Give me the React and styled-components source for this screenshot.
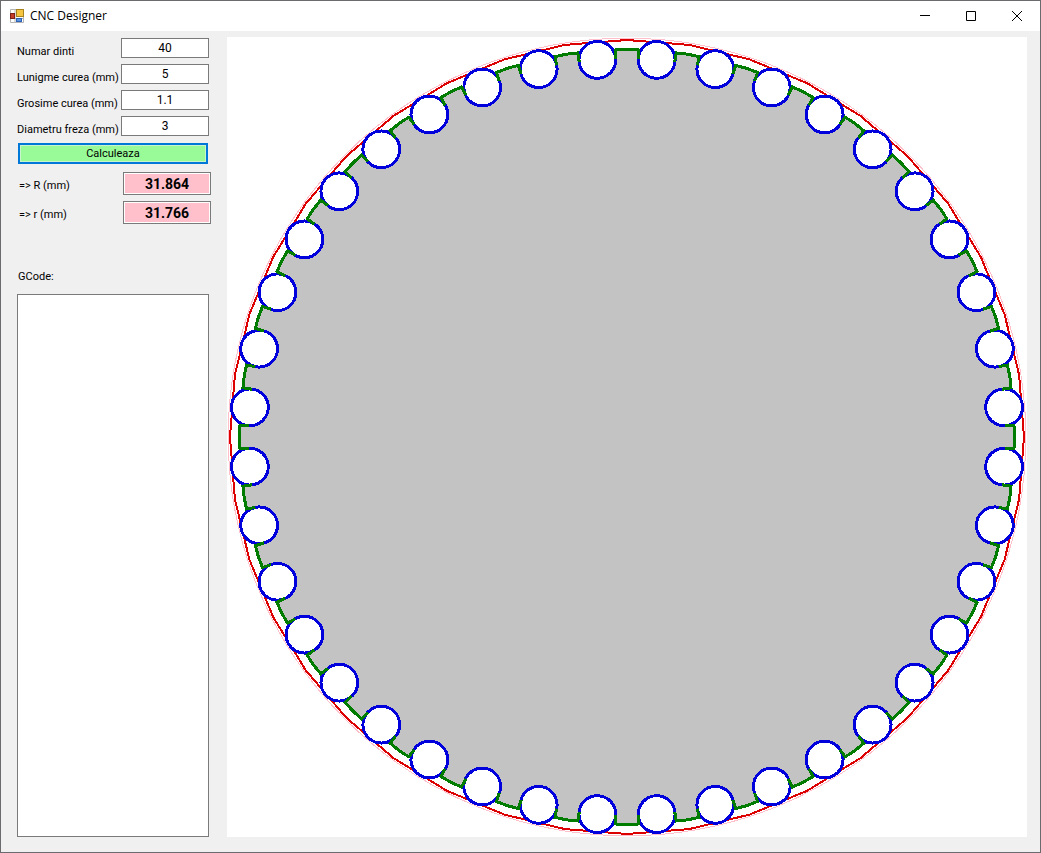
import React from 'react';
import styled, { createGlobalStyle } from 'styled-components';

const GlobalStyle = createGlobalStyle`
  * {
    box-sizing: border-box;
  }

  body {
    margin: 0;
    font-family: Roboto, "Liberation Sans", Arial, sans-serif;
    font-size: 11px;
    line-height: 13px;
    color: #000;
  }
`;

const Window = styled.div`
  min-height: 100vh;
  display: flex;
  flex-direction: column;
  background: #f0f0f0;
  border: 1px solid #6b6b6d;
`;

const TitleBar = styled.header`
  display: flex;
  align-items: stretch;
  height: 30px;
  padding-left: 9px;
  background: #fff;
`;

const AppIcon = styled.svg`
  align-self: center;
  width: 14px;
  height: 14px;
  margin-right: 6px;
`;

const Title = styled.h1`
  flex: 1;
  margin: 0;
  font-family: "Open Sans", "Noto Sans", sans-serif;
  font-size: 12px;
  font-weight: 400;
  line-height: 30px;
`;

const CaptionButton = styled.button`
  width: 46px;
  padding: 0;
  border: 0;
  background: transparent;
  display: flex;
  align-items: center;
  justify-content: center;

  &:hover {
    background: #e5e5e5;
  }

  & svg {
    width: 10px;
    height: 10px;
    fill: none;
    stroke: #000;
  }
`;

const Body = styled.main`
  flex: 1;
  display: flex;
  gap: 16px;
  padding: 6px 13px 15px 16px;
`;

const Sidebar = styled.form`
  flex: 0 0 194px;
  display: flex;
  flex-direction: column;
`;

const Fields = styled.div`
  display: flex;
  flex-direction: column;
  gap: 6px;
  padding: 1px 2px 0 0;
`;

const Results = styled(Fields)`
  padding: 8px 0 0 2px;
`;

const Row = styled.div`
  display: flex;
  justify-content: space-between;
`;

const Label = styled.label`
  padding-top: 7px;
  white-space: nowrap;
`;

const Field = styled.input`
  width: 88px;
  height: 20px;
  padding: 0;
  border: 1px solid #7a7a7a;
  background: #fff;
  color: #000;
  font: inherit;
  font-size: 12px;
  text-align: center;
  outline: none;
`;

const Result = styled(Field)`
  height: 23px;
  background: #ffc0cb;
  box-shadow: inset 0 0 0 1px #fff;
  font-size: 14px;
  font-weight: 700;
`;

const Calculate = styled.button`
  height: 21px;
  margin: 7px 3px 0 1px;
  padding: 0;
  border: 2px solid #0078d7;
  background: #98fb98;
  box-shadow: inset 0 0 0 1px #c8f5cc;
  color: #000;
  font: inherit;
`;

const GCodeLabel = styled(Label)`
  padding: 46px 0 11px 1px;
`;

const GCode = styled.textarea`
  flex: 1;
  margin-right: 2px;
  padding: 2px;
  border: 1px solid #7a7a7a;
  background: #fff;
  font: inherit;
  resize: none;
  outline: none;
`;

const Canvas = styled.svg`
  flex: 1;
  min-width: 0;
  align-self: flex-start;
  aspect-ratio: 1;
  background: #fff;
`;

const fields = [
  { id: 'teeth', label: 'Numar dinti', value: '40' },
  { id: 'length', label: 'Lunigme curea (mm)', value: '5' },
  { id: 'thickness', label: 'Grosime curea (mm)', value: '1.1' },
  { id: 'cutter', label: 'Diametru freza (mm)', value: '3' },
];

const results = [
  { id: 'outer', label: '=> R (mm)', value: '31.864' },
  { id: 'inner', label: '=> r (mm)', value: '31.766' },
];

const TEETH = 40;
const STEP = 360 / TEETH;
const OUTER = 398.8;
const INNER = 397;
const CUTTER_ORBIT = 378.3;
const CUTTER = 18.4;

const rad = deg => (deg * Math.PI) / 180;
const indices = [...Array(TEETH).keys()];

// rotates a point given in the frame of the tooth that points right
const rotate = ([x, y], deg) => {
  const a = rad(deg);
  return [
    x * Math.cos(a) - y * Math.sin(a),
    x * Math.sin(a) + y * Math.cos(a),
  ];
};

const toPoints = list => list.map(p => p.map(n => n.toFixed(2)).join(',')).join(' ');

const toothShape = [[378, -11.5], [387, -11.5], [387.6, 0], [387, 11.5], [378, 11.5]];
const teeth = indices.map(i => toothShape.map(p => rotate(p, i * STEP)));
const belt = [...indices, TEETH].map(i => rotate([INNER, 0], i * STEP));
const cutters = indices.map(i => rotate([CUTTER_ORBIT, 0], (i + 0.5) * STEP));

const Pulley = () => (
  <Canvas viewBox="-400 -400 800 800" shapeRendering="crispEdges" role="img" aria-label="Pulley">
    <circle r={OUTER} fill="none" stroke="#ffc0cb" />
    <polyline points={toPoints(belt)} fill="none" stroke="#dc0000" strokeWidth="2" />
    <polygon points={toPoints(teeth.flat())} fill="#c3c3c3" />
    {cutters.map(([x, y], i) => (
      <circle key={i} cx={x} cy={y} r={CUTTER} fill="#fff" stroke="#0000dc" strokeWidth="3" />
    ))}
    {teeth.map((tooth, i) => (
      <polyline key={i} points={toPoints(tooth)} fill="none" stroke="#007d00" strokeWidth="3" />
    ))}
  </Canvas>
);

const App = () => (
  <>
    <GlobalStyle />
    <Window>
      <TitleBar>
        <AppIcon viewBox="0 0 14 14" aria-hidden="true">
          <path d="M.5.5h13v13H.5zM5 .5v13M.5 9.5h13" fill="#fff" stroke="#b4b4b4" />
          <rect x="6.5" y=".5" width="7" height="7" fill="#f5c542" stroke="#a8821c" />
          <rect x=".5" y="4.5" width="4" height="5" fill="#c23b2b" stroke="#7d2018" />
          <rect x="6.5" y="9.5" width="5" height="3" fill="#5a94e0" stroke="#2f62b5" />
        </AppIcon>
        <Title>CNC Designer</Title>
        <CaptionButton aria-label="Minimize">
          <svg viewBox="0 0 10 10"><path d="M0 4.5h10" /></svg>
        </CaptionButton>
        <CaptionButton aria-label="Maximize">
          <svg viewBox="0 0 10 10"><path d="M.5.5h9v9h-9z" /></svg>
        </CaptionButton>
        <CaptionButton aria-label="Close">
          <svg viewBox="0 0 10 10"><path d="M0 0l10 10M10 0L0 10" /></svg>
        </CaptionButton>
      </TitleBar>
      <Body>
        <Sidebar onSubmit={e => e.preventDefault()}>
          <Fields>
            {fields.map(f => (
              <Row key={f.id}>
                <Label htmlFor={f.id}>{f.label}</Label>
                <Field id={f.id} defaultValue={f.value} />
              </Row>
            ))}
          </Fields>
          <Calculate type="submit">Calculeaza</Calculate>
          <Results>
            {results.map(r => (
              <Row key={r.id}>
                <Label htmlFor={r.id}>{r.label}</Label>
                <Result id={r.id} value={r.value} readOnly />
              </Row>
            ))}
          </Results>
          <GCodeLabel htmlFor="gcode">GCode:</GCodeLabel>
          <GCode id="gcode" />
        </Sidebar>
        <Pulley />
      </Body>
    </Window>
  </>
);

export default App;
